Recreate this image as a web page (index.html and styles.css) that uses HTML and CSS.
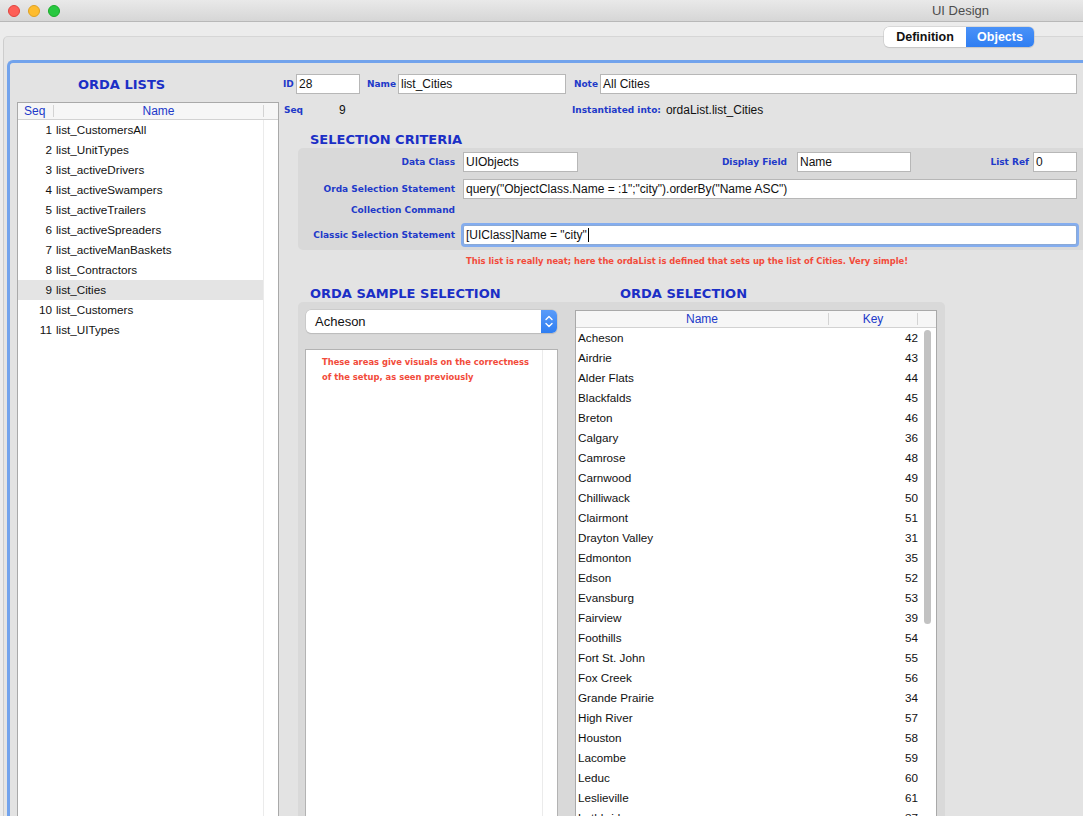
FILE: index.html
```html
<!DOCTYPE html>
<html>
<head>
<meta charset="utf-8">
<title>UI Design</title>
<link rel="stylesheet" href="styles.css">
</head>
<body>
<div class="window">
  <div class="titlebar">
    <div class="lights"><span class="light red"></span><span class="light yellow"></span><span class="light green"></span></div>
    <div class="title">UI Design</div>
  </div>
  <div class="toolbar"></div>
  <div class="tabview">
    <div class="tabs">
      <div class="seg"><span class="seg-item">Definition</span><span class="seg-item active">Objects</span></div>
    </div>
    <div class="frame">
      <div class="left">
        <div class="heading lists-title">ORDA LISTS</div>
        <div class="list llist">
          <div class="list-head">
            <span class="lh-seq">Seq</span><i class="hdiv"></i><span class="lh-name">Name</span><i class="hdiv"></i><span class="lh-scroll"></span>
          </div>
          <div class="list-body">
            <div class="rows lrows">
              <div class="lrow"><span class="c-seq">1</span><span class="c-name">list_CustomersAll</span></div>
              <div class="lrow"><span class="c-seq">2</span><span class="c-name">list_UnitTypes</span></div>
              <div class="lrow"><span class="c-seq">3</span><span class="c-name">list_activeDrivers</span></div>
              <div class="lrow"><span class="c-seq">4</span><span class="c-name">list_activeSwampers</span></div>
              <div class="lrow"><span class="c-seq">5</span><span class="c-name">list_activeTrailers</span></div>
              <div class="lrow"><span class="c-seq">6</span><span class="c-name">list_activeSpreaders</span></div>
              <div class="lrow"><span class="c-seq">7</span><span class="c-name">list_activeManBaskets</span></div>
              <div class="lrow"><span class="c-seq">8</span><span class="c-name">list_Contractors</span></div>
              <div class="lrow selected"><span class="c-seq">9</span><span class="c-name">list_Cities</span></div>
              <div class="lrow"><span class="c-seq">10</span><span class="c-name">list_Customers</span></div>
              <div class="lrow"><span class="c-seq">11</span><span class="c-name">list_UITypes</span></div>
            </div>
            <div class="scroll-col lscroll"></div>
          </div>
        </div>
      </div>

      <div class="right">
        <div class="row1">
          <span class="lbl lbl-id">ID</span>
          <span class="input w-id">28</span>
          <span class="lbl lbl-name">Name</span>
          <span class="input w-name">list_Cities</span>
          <span class="lbl lbl-note">Note</span>
          <span class="input w-note">All Cities</span>
        </div>
        <div class="row2">
          <span class="lbl lbl-seq">Seq</span>
          <span class="val-seq">9</span>
          <span class="lbl lbl-inst">Instantiated into:</span>
          <span class="val-inst">ordaList.list_Cities</span>
        </div>

        <div class="heading sel-title">SELECTION CRITERIA</div>
        <div class="panel crit">
          <div class="crow">
            <span class="lbl cl">Data Class</span>
            <span class="input w-dc">UIObjects</span>
            <span class="lbl cl-df">Display Field</span>
            <span class="input w-df">Name</span>
            <span class="lbl cl-lr">List Ref</span>
            <span class="input w-lr">0</span>
          </div>
          <div class="crow r-b">
            <span class="lbl cl">Orda Selection Statement</span>
            <span class="input w-full">query("ObjectClass.Name = :1";"city").orderBy("Name ASC")</span>
          </div>
          <div class="crow r-c">
            <span class="lbl cl">Collection Command</span>
          </div>
          <div class="crow r-d">
            <span class="lbl cl">Classic Selection Statement</span>
            <span class="input w-full focused">[UIClass]Name = "city"<i class="caret"></i></span>
          </div>
        </div>
        <div class="note top-note">This list is really neat; here the ordaList is defined that sets up the list of Cities. Very simple!</div>

        <div class="heads2">
          <span class="heading h-sample">ORDA SAMPLE SELECTION</span>
          <span class="heading h-sel">ORDA SELECTION</span>
        </div>
        <div class="panel lower">
          <div class="sample">
            <div class="popup">
              <span class="popup-text">Acheson</span>
              <span class="stepper">
                <svg width="16" height="23" viewBox="0 0 16 23"><path d="M5 9.5 L8 6.5 L11 9.5" fill="none" stroke="#fff" stroke-width="1.4" stroke-linecap="round" stroke-linejoin="round"/><path d="M5 13.5 L8 16.5 L11 13.5" fill="none" stroke="#fff" stroke-width="1.4" stroke-linecap="round" stroke-linejoin="round"/></svg>
              </span>
            </div>
            <div class="sample-box">
              <div class="sample-content note box-note">These areas give visuals on the correctness<br>of the setup, as seen previously</div>
              <div class="scroll-col sscroll"></div>
            </div>
          </div>

          <div class="list rlist">
            <div class="list-head">
              <span class="rh-name">Name</span><i class="hdiv"></i><span class="rh-key">Key</span><i class="hdiv"></i><span class="rh-scroll"></span>
            </div>
            <div class="list-body">
              <div class="rows rrows">
                <div class="rrow"><span class="c-city">Acheson</span><span class="c-key">42</span></div>
                <div class="rrow"><span class="c-city">Airdrie</span><span class="c-key">43</span></div>
                <div class="rrow"><span class="c-city">Alder Flats</span><span class="c-key">44</span></div>
                <div class="rrow"><span class="c-city">Blackfalds</span><span class="c-key">45</span></div>
                <div class="rrow"><span class="c-city">Breton</span><span class="c-key">46</span></div>
                <div class="rrow"><span class="c-city">Calgary</span><span class="c-key">36</span></div>
                <div class="rrow"><span class="c-city">Camrose</span><span class="c-key">48</span></div>
                <div class="rrow"><span class="c-city">Carnwood</span><span class="c-key">49</span></div>
                <div class="rrow"><span class="c-city">Chilliwack</span><span class="c-key">50</span></div>
                <div class="rrow"><span class="c-city">Clairmont</span><span class="c-key">51</span></div>
                <div class="rrow"><span class="c-city">Drayton Valley</span><span class="c-key">31</span></div>
                <div class="rrow"><span class="c-city">Edmonton</span><span class="c-key">35</span></div>
                <div class="rrow"><span class="c-city">Edson</span><span class="c-key">52</span></div>
                <div class="rrow"><span class="c-city">Evansburg</span><span class="c-key">53</span></div>
                <div class="rrow"><span class="c-city">Fairview</span><span class="c-key">39</span></div>
                <div class="rrow"><span class="c-city">Foothills</span><span class="c-key">54</span></div>
                <div class="rrow"><span class="c-city">Fort St. John</span><span class="c-key">55</span></div>
                <div class="rrow"><span class="c-city">Fox Creek</span><span class="c-key">56</span></div>
                <div class="rrow"><span class="c-city">Grande Prairie</span><span class="c-key">34</span></div>
                <div class="rrow"><span class="c-city">High River</span><span class="c-key">57</span></div>
                <div class="rrow"><span class="c-city">Houston</span><span class="c-key">58</span></div>
                <div class="rrow"><span class="c-city">Lacombe</span><span class="c-key">59</span></div>
                <div class="rrow"><span class="c-city">Leduc</span><span class="c-key">60</span></div>
                <div class="rrow"><span class="c-city">Leslieville</span><span class="c-key">61</span></div>
                <div class="rrow"><span class="c-city">Lethbridge</span><span class="c-key">37</span></div>
              </div>
              <div class="scroll-col rscroll"><div class="thumb"></div></div>
            </div>
          </div>
        </div>
      </div>
    </div>
  </div>
</div>
</body>
</html>
```
FILE: styles.css
```css
* { box-sizing: border-box; }
html, body { margin: 0; padding: 0; }
body {
  width: 1083px;
  height: 816px;
  overflow: hidden;
  background: #ececec;
  font-family: "Liberation Sans", Arial, sans-serif;
  font-size: 12px;
  color: #111;
}
.window { display: flex; flex-direction: column; height: 816px; width: 1083px; }

/* title bar */
.titlebar {
  height: 22px;
  flex: none;
  display: flex;
  align-items: center;
  background: linear-gradient(#e9e9e9, #d6d6d6);
  border-bottom: 1px solid #b8b8b8;
}
.lights { display: flex; gap: 8px; margin-left: 8px; }
.light { width: 12px; height: 12px; border-radius: 50%; display: block; }
.red { background: #fe5f57; border: 0.5px solid #e0443e; }
.yellow { background: #febc2e; border: 0.5px solid #dea123; }
.green { background: #28c840; border: 0.5px solid #1aab29; }
.title { margin-left: auto; margin-right: 94px; font-size: 13px; color: #4d4d4d; }

.toolbar { height: 14px; flex: none; background: #ececec; }

/* tab view */
.tabview {
  flex: 1;
  display: flex;
  flex-direction: column;
  margin-left: 3px;
  background: #e5e5e5;
  border-top: 1px solid #d6d6d6;
  border-left: 1px solid #cdcdcd;
  border-top-left-radius: 5px;
  min-height: 0;
}
.tabs { display: flex; justify-content: flex-end; margin-top: -10px; padding-right: 49px; height: 20px; flex: none; }
.seg {
  display: flex;
  height: 20px;
  border-radius: 5px;
  overflow: hidden;
  box-shadow: 0 0 0 0.5px #c4c4c4, 0 1px 1px rgba(0,0,0,0.12);
  background: #fff;
}
.seg-item {
  font-weight: bold;
  font-size: 12.5px;
  line-height: 20px;
  padding: 0 12px;
  color: #111;
}
.seg-item:first-child { width: 82px; text-align: center; padding: 0; }
.seg-item.active { background: linear-gradient(#4a92f8, #2f7ef2); color: #fff; width: 68px; text-align: center; padding: 0; }

.frame {
  flex: 1;
  margin-top: 13px;
  margin-left: 3px;
  border-top: 3px solid #72a3ec;
  border-left: 3px solid #72a3ec;
  border-top-left-radius: 6px;
  background: #e3e3e3;
  display: flex;
  min-height: 0;
  width: 1090px;
}

/* headings & labels */
.heading {
  font-family: "DejaVu Sans", sans-serif;
  font-weight: bold;
  font-size: 13px;
  line-height: 16px;
  color: #1b2fc6;
}
.lbl {
  font-family: "DejaVu Sans", sans-serif;
  font-weight: bold;
  font-size: 9px;
  color: #2139c9;
  white-space: nowrap;
}
.note {
  font-family: "DejaVu Sans", sans-serif;
  font-weight: bold;
  font-size: 8.4px;
  color: #f24b3a;
}
.input {
  display: block;
  height: 20px;
  background: #fff;
  border: 1px solid #b7b7b7;
  line-height: 18px;
  padding: 0 2px;
  font-size: 12px;
  white-space: nowrap;
  overflow: hidden;
  flex: none;
}

/* left column */
.left { width: 262px; margin-left: 7px; display: flex; flex-direction: column; flex: none; }
.lists-title { padding-top: 12px; line-height: 20px; height: 32px; padding-left: 61px; }
.list {
  background: #fff;
  border: 1px solid #a9a9a9;
  border-bottom: none;
  display: flex;
  flex-direction: column;
}
.llist { margin-top: 7px; flex: 1; }
.list-head {
  height: 17px;
  flex: none;
  display: flex;
  align-items: center;
  background: #f6f6f6;
  border-bottom: 1px solid #d2d2d2;
  color: #2139c9;
  font-size: 12px;
  line-height: 16px;
}
.hdiv { display: block; width: 1px; height: 12px; background: #d3d3d3; flex: none; }
.lh-seq { width: 35px; padding-left: 6px; }
.lh-name { width: 209px; text-align: center; }
.lh-scroll { width: 14px; }
.list-body { flex: 1; display: flex; min-height: 0; }
.rows { display: flex; flex-direction: column; }
.lrows { width: 245px; }
.lrow { height: 20px; line-height: 20px; display: flex; font-size: 11.7px; }
.lrow.selected { background: #e4e4e4; }
.c-seq { width: 36px; text-align: right; padding-right: 2px; }
.c-name { padding-left: 2px; }
.scroll-col { border-left: 1px solid #ebebeb; background: #fff; }
.lscroll { width: 15px; }

/* right column */
.right { width: 800px; margin-left: 4px; padding-top: 11px; display: flex; flex-direction: column; flex: none; }
.row1 { display: flex; align-items: center; height: 20px; }
.lbl-id { width: 13px; }
.w-id { width: 64px; }
.lbl-name { width: 38px; text-align: right; padding-right: 2px; }
.w-name { width: 168px; }
.lbl-note { width: 34px; text-align: right; padding-right: 2px; }
.w-note { width: 477px; }
.row2 { display: flex; align-items: center; height: 18px; margin-top: 7px; }
.lbl-seq { width: 56px; padding-left: 1px; }
.val-seq { width: 233px; }
.lbl-inst { margin-right: 5px; }

.sel-title { margin-top: 13px; padding-left: 27px; height: 16px; }
.panel { background: #d9d9d9; border-radius: 5px; margin-left: 15px; }
.crit { width: 790px; padding: 4px 0 5px 0; }
.crow { display: flex; align-items: center; height: 20px; }
.cl { width: 157px; text-align: right; margin-right: 8px; }
.w-dc { width: 115px; }
.cl-df { width: 209px; text-align: right; margin-right: 10px; }
.w-df { width: 114px; }
.cl-lr { width: 118px; text-align: right; margin-right: 4px; }
.w-lr { width: 44px; }
.w-full { width: 614px; }
.r-b { margin-top: 7px; }
.r-c { margin-top: 1px; }
.r-d { margin-top: 5px; }
.focused {
  border-color: #8aa9d6;
  border-radius: 2px;
  box-shadow: 0 0 0 2px #84adef;
  overflow: visible;
}
.caret { display: inline-block; width: 1px; height: 14px; background: #000; vertical-align: -3px; margin-left: 1px; }

.top-note { margin-top: 5px; height: 12px; line-height: 12px; padding-left: 183px; }

.heads2 { display: flex; margin-top: 19px; height: 16px; }
.h-sample { width: 337px; padding-left: 27px; }

.lower {
  flex: 1;
  width: 647px;
  display: flex;
  padding: 8px 0 0 7px;
  border-bottom-left-radius: 0;
  border-bottom-right-radius: 0;
  min-height: 0;
}
.sample { width: 253px; display: flex; flex-direction: column; flex: none; }
.popup {
  margin-left: 1px;
  width: 251px;
  height: 23px;
  background: #fff;
  border-radius: 5px;
  box-shadow: 0 0 0 0.5px #bdbdbd, 0 1px 1px rgba(0,0,0,0.15);
  display: flex;
  align-items: center;
  overflow: hidden;
}
.popup-text { flex: 1; padding-left: 9px; font-size: 13px; }
.stepper {
  width: 16px;
  height: 23px;
  background: linear-gradient(#5a9cf9, #2f7ef2);
  display: block;
}
.stepper svg { display: block; }
.sample-box {
  margin-top: 16px;
  flex: 1;
  background: #fff;
  border: 1px solid #b3b3b3;
  border-bottom: none;
  display: flex;
}
.sample-content { flex: 1; padding: 5px 0 0 16px; line-height: 15px; }
.sscroll { width: 15px; }

.rlist { margin-left: 17px; width: 362px; flex: none; }
.rlist .list-head { height: 17px; }
.rh-name { width: 252px; text-align: center; }
.rh-key { width: 88px; text-align: center; }
.rh-scroll { width: 18px; }
.rrows { width: 342px; }
.rrow { height: 20px; line-height: 20px; display: flex; font-size: 11.7px; }
.c-city { width: 252px; padding-left: 2px; }
.c-key { width: 90px; text-align: right; padding-right: 0px; }
.rscroll { width: 18px; border-left: none; padding: 2px 0 0 6px; }
.thumb { width: 7px; height: 294px; background: #c2c2c2; border-radius: 4px; }
```
